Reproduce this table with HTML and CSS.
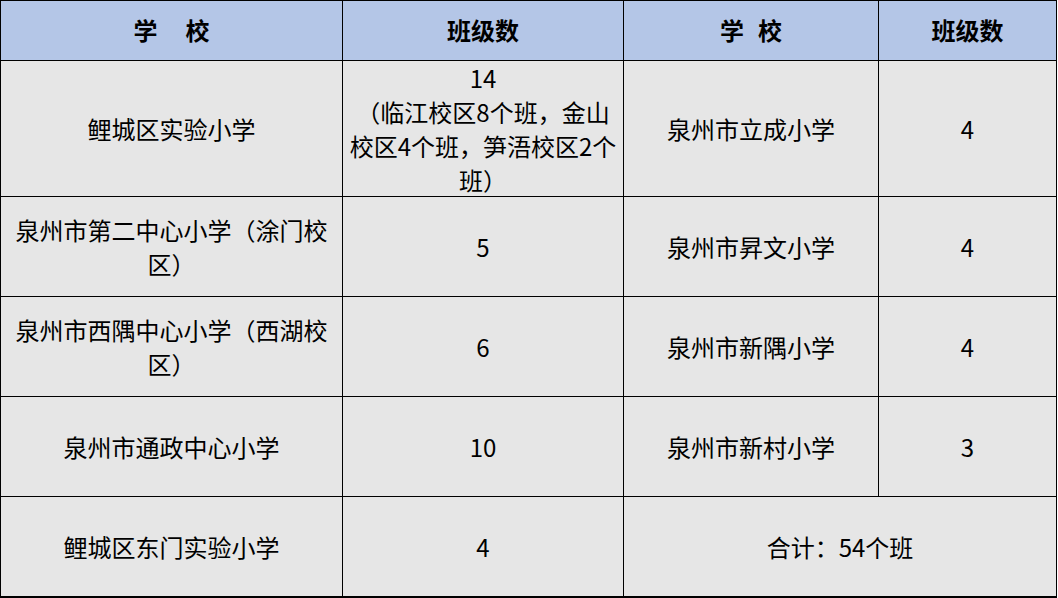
FILE: index.html
```html
<!DOCTYPE html>
<html lang="zh-CN">
<head>
<meta charset="utf-8">
<title>班级数</title>
<link rel="stylesheet" href="styles.css">
</head>
<body>
<div class="table">
  <div class="cell head">学<span class="gap-wide"></span>校</div>
  <div class="cell head">班级数</div>
  <div class="cell head">学<span class="gap-narrow"></span>校</div>
  <div class="cell head">班级数</div>

  <div class="cell">鲤城区实验小学</div>
  <div class="cell wrap">14<br>（临江校区8个班，金山校区4个班，笋浯校区2个班）</div>
  <div class="cell">泉州市立成小学</div>
  <div class="cell">4</div>

  <div class="cell wrap">泉州市第二中心小学（涂门校区）</div>
  <div class="cell">5</div>
  <div class="cell">泉州市昇文小学</div>
  <div class="cell">4</div>

  <div class="cell wrap">泉州市西隅中心小学（西湖校区）</div>
  <div class="cell">6</div>
  <div class="cell">泉州市新隅小学</div>
  <div class="cell">4</div>

  <div class="cell">泉州市通政中心小学</div>
  <div class="cell">10</div>
  <div class="cell">泉州市新村小学</div>
  <div class="cell">3</div>

  <div class="cell last">鲤城区东门实验小学</div>
  <div class="cell last">4</div>
  <div class="cell last span2">合计：54个班</div>
</div>
</body>
</html>
```

FILE: styles.css
```css
html, body {
  margin: 0;
  padding: 0;
  background: #ffffff;
}

.table {
  display: grid;
  grid-template-columns: 342px 281px 255px 178px;
  grid-template-rows: 60px 136px 100px 100px 100px 101px;
  width: 1057px;
  height: 598px;
  box-sizing: border-box;
  border-left: 1px solid #000;
  border-top: 1px solid #000;
  font-family: "Noto Sans CJK SC", "Microsoft YaHei", sans-serif;
  font-size: 24px;
  color: #000;
}

.cell {
  box-sizing: border-box;
  border-right: 1px solid #000;
  border-bottom: 1px solid #000;
  background: #e6e6e6;
  display: flex;
  align-items: center;
  justify-content: center;
  text-align: center;
  padding: 0 6px;
  line-height: 34px;
}

.cell.last {
  border-bottom-width: 2px;
}

.span2 {
  grid-column: span 2;
}

.head {
  background: #b4c6e7;
  font-weight: bold;
  padding-bottom: 2px;
}

.wrap {
  display: block;
  align-self: stretch;
  display: flex;
  flex-direction: column;
  justify-content: center;
}

.gap-wide {
  display: inline-block;
  width: 28px;
}

.gap-narrow {
  display: inline-block;
  width: 14px;
}
```
